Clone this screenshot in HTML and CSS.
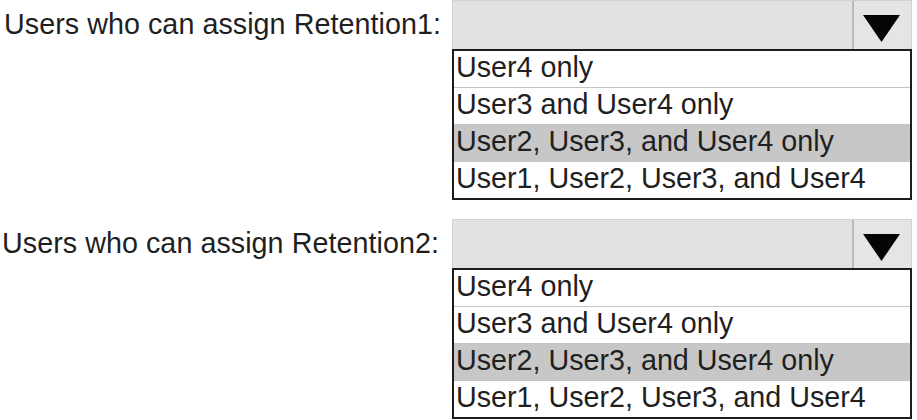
FILE: index.html
```html
<!DOCTYPE html>
<html>
<head>
<meta charset="utf-8">
<link rel="stylesheet" href="styles.css">
</head>
<body>
<div class="page">
  <div class="q">
    <div class="label">Users who can assign Retention1:</div>
    <div class="dd">
      <div class="dd-head">
        <div class="dd-field"></div>
        <div class="dd-btn"><svg width="37" height="27" viewBox="0 0 37 27"><polygon points="0,0 37,0 18.5,27" fill="#050505"/></svg></div>
      </div>
      <ul class="dd-list">
        <li>User4 only</li>
        <li>User3 and User4 only</li>
        <li class="sel">User2, User3, and User4 only</li>
        <li>User1, User2, User3, and User4</li>
      </ul>
    </div>
  </div>
  <div class="q q2">
    <div class="label">Users who can assign Retention2:</div>
    <div class="dd">
      <div class="dd-head">
        <div class="dd-field"></div>
        <div class="dd-btn"><svg width="37" height="27" viewBox="0 0 37 27"><polygon points="0,0 37,0 18.5,27" fill="#050505"/></svg></div>
      </div>
      <ul class="dd-list">
        <li>User4 only</li>
        <li>User3 and User4 only</li>
        <li class="sel">User2, User3, and User4 only</li>
        <li>User1, User2, User3, and User4</li>
      </ul>
    </div>
  </div>
</div>
</body>
</html>
```
FILE: styles.css
```css
html, body {
  margin: 0;
  padding: 0;
  background: #ffffff;
}
body {
  font-family: "Liberation Sans", Arial, sans-serif;
  font-size: 28.7px;
  color: #1f1f1f;
}
.page {
  display: flex;
  flex-direction: column;
  gap: 19px;
}
.q {
  display: grid;
  grid-template-columns: 452px 460px;
  align-items: start;
}
.label {
  padding-left: 4px;
  line-height: 48px;
  height: 49px;
  white-space: nowrap;
  letter-spacing: 0.05px;
}
.q2 .label {
  padding-left: 2px;
}
.dd {
  display: flex;
  flex-direction: column;
}
.dd-head {
  display: flex;
  height: 49px;
  box-sizing: border-box;
  background: #e2e2e2;
  border: 1px solid #d2d2d2;
  border-bottom: none;
}
.dd-field {
  flex: 1;
}
.dd-btn {
  width: 59px;
  box-sizing: border-box;
  border-left: 2px solid #b9b9b9;
  padding-left: 9px;
  padding-top: 14px;
  background: #e5e5e5;
}
.dd-btn svg {
  display: block;
}
.dd-list {
  list-style: none;
  margin: 0;
  padding: 0;
  border: 2px solid #1c1c1c;
  background: #ffffff;
}
.dd-list li {
  height: 36px;
  line-height: 32px;
  padding-left: 2px;
  white-space: nowrap;
  border-bottom: 1px solid #c4c4c4;
}
.dd-list li:last-child {
  border-bottom: none;
}
.dd-list li.sel {
  background: #c7c7c7;
}
```
